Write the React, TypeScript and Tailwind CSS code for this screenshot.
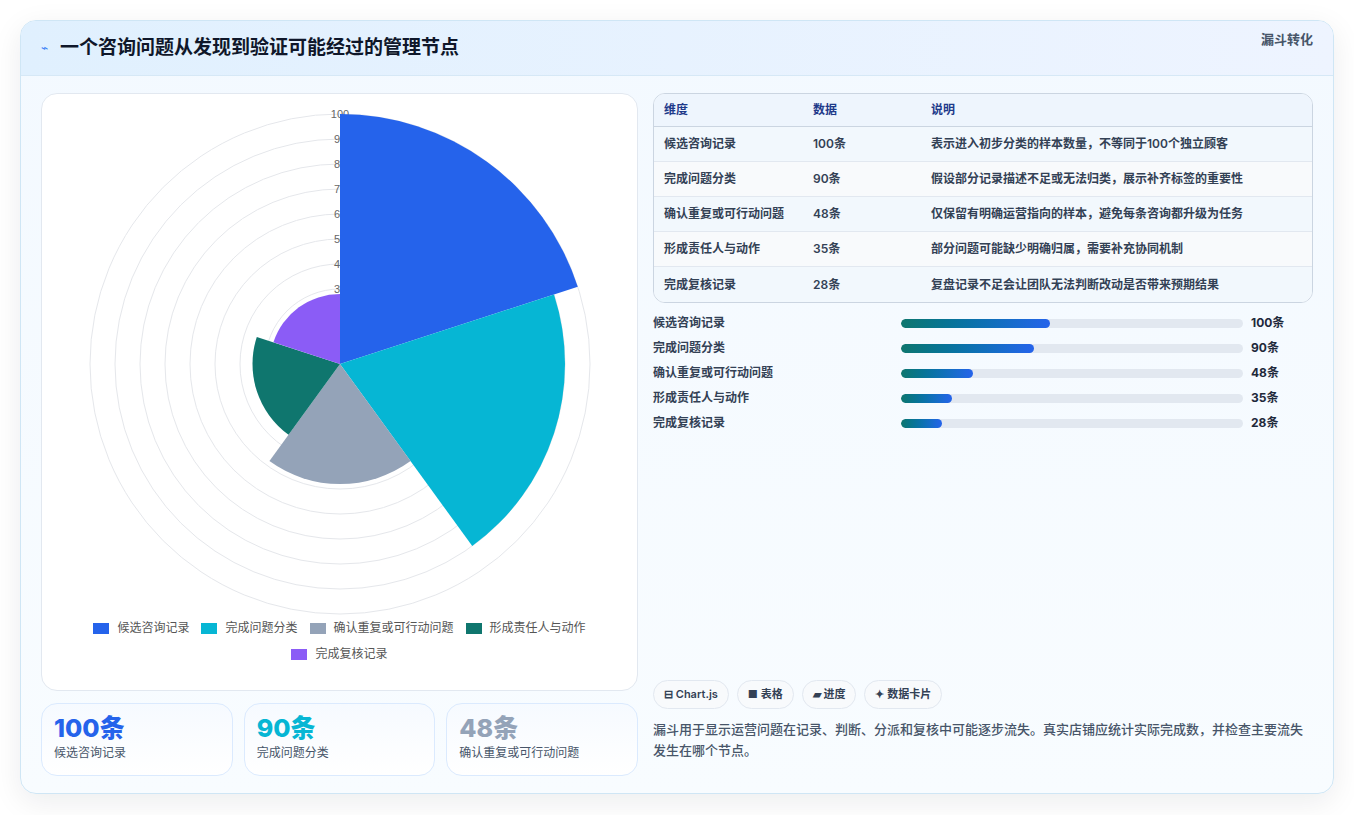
const items = [
  { label: "候选咨询记录", value: 100, color: "#2563eb", bar: 43.5, note: "表示进入初步分类的样本数量，不等同于100个独立顾客" },
  { label: "完成问题分类", value: 90, color: "#06b6d4", bar: 39, note: "假设部分记录描述不足或无法归类，展示补齐标签的重要性" },
  { label: "确认重复或可行动问题", value: 48, color: "#94a3b8", bar: 21, note: "仅保留有明确运营指向的样本，避免每条咨询都升级为任务" },
  { label: "形成责任人与动作", value: 35, color: "#0f766e", bar: 15, note: "部分问题可能缺少明确归属，需要补充协同机制" },
  { label: "完成复核记录", value: 28, color: "#8b5cf6", bar: 12, note: "复盘记录不足会让团队无法判断改动是否带来预期结果" },
];

const CX = 298;
const CY = 270;

function sector(r: number, a0: number, a1: number) {
  const rad = (d: number) => (d * Math.PI) / 180;
  const x0 = CX + r * Math.cos(rad(a0));
  const y0 = CY + r * Math.sin(rad(a0));
  const x1 = CX + r * Math.cos(rad(a1));
  const y1 = CY + r * Math.sin(rad(a1));
  return `M${CX} ${CY} L${x0} ${y0} A${r} ${r} 0 0 1 ${x1} ${y1} Z`;
}

function PolarChart() {
  const ticks = [10, 20, 30, 40, 50, 60, 70, 80, 90, 100];
  return (
    <svg width="597" height="525" viewBox="0 0 597 525" className="block">
      {ticks.map((t) => (
        <circle key={t} cx={CX} cy={CY} r={t * 2.5} fill="none" stroke="#e5e7eb" strokeWidth="1" />
      ))}
      {ticks.map((t) => (
        <text key={t} x={CX} y={CY - t * 2.5 + 4} textAnchor="middle" fontSize="11" fill="#666" fontFamily="Liberation Sans, sans-serif">
          {t}
        </text>
      ))}
      {items.map((it, i) => (
        <path key={i} d={sector(it.value * 2.5, -90 + i * 72, -18 + i * 72)} fill={it.color} />
      ))}
    </svg>
  );
}

export default function App() {
  return (
    <div className="min-h-screen bg-white p-5" style={{ fontFamily: "Inter, 'Noto Sans CJK SC', sans-serif" }}>
      <div className="w-[1314px] h-[774px] rounded-2xl border border-[#cfe6f5] shadow-[0_8px_30px_rgba(15,23,42,0.08)] overflow-hidden bg-gradient-to-b from-[#f3f9ff] to-[#f8fcff] flex flex-col">
        {/* header */}
        <div className="h-[55px] flex items-center justify-between px-5 bg-gradient-to-r from-[#e0f0fe] to-[#eef4ff] border-b border-[#d6e8f6]">
          <div className="flex items-center gap-3">
            <span className="text-[#3b82f6] text-xs">⌁</span>
            <h1 className="text-[19px] font-bold text-[#0f172a]">一个咨询问题从发现到验证可能经过的管理节点</h1>
          </div>
          <span className="text-[13px] font-bold text-[#475569] -mt-4">漏斗转化</span>
        </div>

        <div className="flex gap-[15px] px-5 pt-[17px]">
          {/* left */}
          <div className="w-[597px] flex flex-col gap-3">
            <div className="h-[598px] bg-white rounded-2xl border border-[#e2e8f0] flex flex-col">
              <PolarChart />
              <div className="flex flex-wrap justify-center gap-x-3 gap-y-2 px-12 text-[12px] text-[#555]">
                {items.map((it) => (
                  <div key={it.label} className="flex items-center gap-2">
                    <span className="w-[16px] h-[11px]" style={{ background: it.color }} />
                    {it.label}
                  </div>
                ))}
              </div>
            </div>
            <div className="grid grid-cols-3 gap-[11px]">
              {items.slice(0, 3).map((it) => (
                <div key={it.label} className="h-[73px] rounded-2xl border border-[#dbeafe] bg-gradient-to-b from-[#f6faff] to-white px-3 pt-2">
                  <div className="text-[25px] font-extrabold leading-8" style={{ color: it.color }}>{it.value}条</div>
                  <div className="text-[12px] text-[#475569]">{it.label}</div>
                </div>
              ))}
            </div>
          </div>

          {/* right */}
          <div className="w-[662px] flex flex-col">
            <div className="rounded-xl border border-[#cbd5e1] overflow-hidden bg-white">
              <div className="flex h-[33px] items-center bg-[#eef5fd] text-[12px] font-bold text-[#1e3a8a] border-b border-[#cbd5e1]">
                <div className="w-[159px] pl-[10px]">维度</div>
                <div className="w-[118px]">数据</div>
                <div>说明</div>
              </div>
              {items.map((it, i) => (
                <div key={it.label} className={`flex h-[35px] items-center text-[12px] font-semibold text-[#334155] ${i % 2 ? "bg-[#f8fafc]" : "bg-[#f2f8fd]"} ${i < 4 ? "border-b border-[#e2e8f0]" : ""}`}>
                  <div className="w-[159px] pl-[10px]">{it.label}</div>
                  <div className="w-[118px]">{it.value}条</div>
                  <div>{it.note}</div>
                </div>
              ))}
            </div>

            <div className="flex flex-col gap-[11px] mt-[13px]">
              {items.map((it) => (
                <div key={it.label} className="flex items-center h-[14px] text-[12px] font-semibold text-[#334155]">
                  <div className="w-[248px]">{it.label}</div>
                  <div className="w-[342px] h-[9px] rounded-full bg-[#e2e8f0] overflow-hidden">
                    <div className="h-full rounded-full bg-gradient-to-r from-[#0f766e] to-[#2563eb]" style={{ width: `${it.bar}%` }} />
                  </div>
                  <div className="ml-2 font-bold text-[#1e293b]">{it.value}条</div>
                </div>
              ))}
            </div>

            <div className="mt-auto pb-[15px]">
              <div className="flex gap-2 text-[11px] font-semibold text-[#334155]">
                {["⊟ Chart.js", "■ 表格", "▰ 进度", "✦ 数据卡片"].map((t) => (
                  <span key={t} className="h-[29px] px-[10px] flex items-center rounded-full border border-[#e2e8f0] bg-[#f8fafc]">{t}</span>
                ))}
              </div>
              <p className="mt-[10px] text-[13px] leading-[21px] text-[#475569] font-medium">
                漏斗用于显示运营问题在记录、判断、分派和复核中可能逐步流失。真实店铺应统计实际完成数，并检查主要流失发生在哪个节点。
              </p>
            </div>
          </div>
        </div>
      </div>
    </div>
  );
}
